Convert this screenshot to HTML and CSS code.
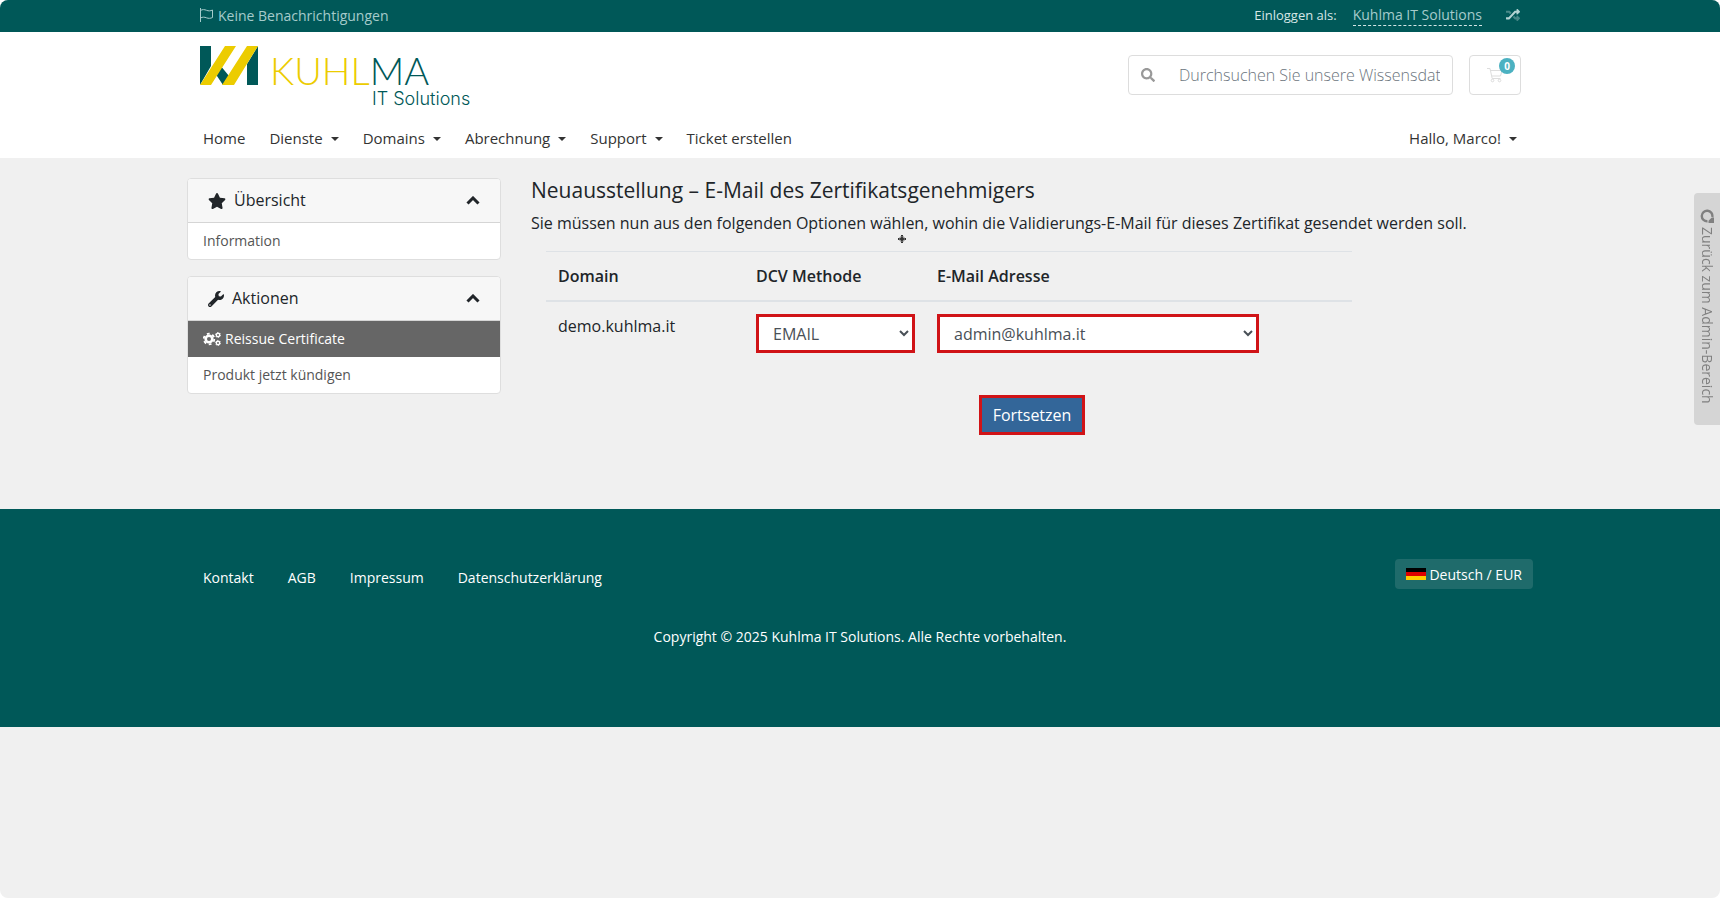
FILE: index.html
```html
<!DOCTYPE html>
<html lang="de">
<head>
    <meta charset="UTF-8">
    <meta name="viewport" content="width=device-width, initial-scale=1.0">
    <title>Kuhlma IT Solutions</title>
    <link rel="stylesheet" href="styles.css">
</head>

<body>
    <header>
        <div class="topbar">
            <div class="container header-inner">
                <button class="notifications" type="button">
                    <svg width="15" height="14" viewBox="0 0 15 14" fill="none" stroke="currentColor"><path d="M1.5 0v14M1.500 2.500c2-1.300 4-1 6-.2s4 .8 6-.3v7.500c-2 1-4 1.100-6 .3s-4-1-6 .2"/></svg>
                    Keine Benachrichtigungen
                </button>
                <div class="active-client">
                    <span>Einloggen als:</span>
                    <a class="client-name" href="#">Kuhlma IT Solutions</a>
                    <a class="client-switch" href="#" aria-label="Konto wechseln">
                        <svg width="14" height="14" viewBox="0 0 512 512" fill="currentColor">
                            <path opacity=".4" d="M504.971 359.029c9.373 9.373 9.373 24.569 0 33.941l-80 79.984c-15.010 15.010-40.971 4.490-40.971-16.971V416h-58.785a12 12 0 0 1-8.773-3.812l-70.556-75.596 53.333-57.143L352 336h32v-39.981c0-21.438 25.943-31.998 40.971-16.971zM12 176h84l52.781 56.551 53.333-57.143-70.556-75.596A12 12 0 0 0 122.785 96H12c-6.627 0-12 5.373-12 12v56c0 6.627 5.373 12 12 12z"/>
                            <path d="M384 176v39.984c0 21.460 25.961 31.980 40.971 16.971l80-79.984c9.373-9.373 9.373-24.569 0-33.941l-80-79.981C409.943 24.021 384 34.582 384 56.019V96h-58.785a12 12 0 0 0-8.773 3.812L96 336H12c-6.627 0-12 5.373-12 12v56c0 6.627 5.373 12 12 12h110.785c3.326 0 6.503-1.381 8.773-3.812L352 176z"/>
                        </svg>
                    </a>
                </div>
            </div>
        </div>

        <div class="masthead">
            <div class="container header-inner">
                <a class="logo" href="#" aria-label="Kuhlma IT Solutions">
                    <svg width="59" height="41" viewBox="0 0 59 41">
                        <path fill="#005858" d="M1 1h11v20L1 40zM59 1v39H48V19zM16 28l5-8 9 11-6 9z"/>
                        <path fill="#eccc00" d="M26 1h11L12 40H1zM48 1h11L35 40H23z"/>
                    </svg>
                    <span class="wordmark">
                        <span class="wordmark-name">KUHL<b>MA</b></span>
                        <span class="wordmark-sub">IT Solutions</span>
                    </span>
                </a>
                <div class="tools">
                    <form class="search">
                        <button type="submit" aria-label="Suchen">
                            <svg width="14" height="14" viewBox="0 0 512 512" fill="currentColor"><path d="M505 442.700L405.300 343c-4.500-4.500-10.600-7-17-7H372c27.600-35.300 44-79.700 44-128C416 93.100 322.900 0 208 0S0 93.100 0 208s93.100 208 208 208c48.300 0 92.700-16.400 128-44v16.300c0 6.400 2.500 12.500 7 17l99.700 99.700c9.400 9.400 24.600 9.400 33.900 0l28.300-28.300c9.400-9.400 9.400-24.600.1-34zM208 336c-70.700 0-128-57.200-128-128 0-70.700 57.200-128 128-128 70.700 0 128 57.200 128 128 0 70.700-57.200 128-128 128z"/></svg>
                        </button>
                        <input type="text" aria-label="Wissensdatenbank durchsuchen" placeholder="Durchsuchen Sie unsere Wissensdatenbank...">
                    </form>
                    <a class="cart" href="#" aria-label="Warenkorb">
                        <svg width="16" height="16" viewBox="0 0 16 16" fill="none" stroke="currentColor"><path d="M0 1.500h3l2.200 10h8.300M3.500 3.500h11.500l-1.500 5.500H4.800"/><circle cx="5.500" cy="13.500" r="1.300"/><circle cx="12.500" cy="13.500" r="1.300"/></svg>
                        <span class="badge">0</span>
                    </a>
                </div>
            </div>
        </div>

        <nav class="navbar">
            <div class="container header-inner">
                <ul class="nav-list">
                    <li><a href="#">Home</a></li>
                    <li><a class="dropdown" href="#">Dienste</a></li>
                    <li><a class="dropdown" href="#">Domains</a></li>
                    <li><a class="dropdown" href="#">Abrechnung</a></li>
                    <li><a class="dropdown" href="#">Support</a></li>
                    <li><a href="#">Ticket erstellen</a></li>
                </ul>
                <ul class="nav-list">
                    <li><a class="dropdown" href="#">Hallo, Marco!</a></li>
                </ul>
            </div>
        </nav>
    </header>

    <div class="container main-body">
        <aside class="sidebar">
            <div class="card">
                <h3 class="card-header">
                    <svg width="18" height="16" viewBox="0 0 576 512" fill="currentColor"><path d="M259.300 17.800L194 150.200 47.900 171.500c-26.200 3.800-36.700 36.100-17.700 54.600l105.700 103-25 145.500c-4.500 26.300 23.200 46 46.400 33.700L288 439.600l130.700 68.700c23.200 12.200 50.900-7.400 46.400-33.700l-25-145.500 105.700-103c19-18.500 8.500-50.800-17.700-54.600L382 150.200 316.700 17.800c-11.700-23.600-45.600-23.900-57.400 0z"/></svg>
                    <span>Übersicht</span>
                    <svg class="chevron" width="14" height="9" viewBox="0 0 14 9"><path d="M1.500 7.500L7 2l5.500 5.500"/></svg>
                </h3>
                <a class="card-item" href="#">Information</a>
            </div>
            <div class="card">
                <h3 class="card-header">
                    <svg width="16" height="16" viewBox="0 0 512 512" fill="currentColor"><path d="M507.730 109.100c-2.240-9.030-13.540-12.090-20.120-5.510l-74.360 74.360-67.880-11.310-11.310-67.880 74.360-74.360c6.620-6.620 3.430-17.900-5.660-20.160-47.380-11.740-99.550.91-136.580 37.930-39.640 39.640-50.550 97.100-34.050 147.200L18.740 402.760c-24.990 24.990-24.990 65.510 0 90.500 24.990 24.990 65.510 24.990 90.500 0l213.210-213.210c50.120 16.710 107.470 5.680 147.370-34.220 37.070-37.070 49.700-89.320 37.910-136.730zM64 472c-13.250 0-24-10.750-24-24 0-13.260 10.750-24 24-24s24 10.740 24 24c0 13.250-10.750 24-24 24z"/></svg>
                    <span>Aktionen</span>
                    <svg class="chevron" width="14" height="9" viewBox="0 0 14 9"><path d="M1.500 7.500L7 2l5.500 5.500"/></svg>
                </h3>
                <a class="card-item active" href="#">
                    <svg width="18" height="14" viewBox="0 0 18 14" fill="none" stroke="currentColor">
                        <circle cx="6" cy="7" r="3.300" stroke-width="2.600"/>
                        <circle cx="6" cy="7" r="5.300" stroke-width="1.800" stroke-dasharray="2.800 2.750"/>
                        <circle cx="15" cy="3" r="1.700" stroke-width="1.400"/>
                        <circle cx="15" cy="3" r="2.600" stroke-width=".8" stroke-dasharray="1.360 1.360"/>
                        <circle cx="15" cy="11" r="1.700" stroke-width="1.400"/>
                        <circle cx="15" cy="11" r="2.600" stroke-width=".8" stroke-dasharray="1.360 1.360"/>
                    </svg>
                    Reissue Certificate
                </a>
                <a class="card-item" href="#">Produkt jetzt kündigen</a>
            </div>
        </aside>

        <main class="content">
            <h2>Neuausstellung – E-Mail des Zertifikatsgenehmigers</h2>
            <p>Sie müssen nun aus den folgenden Optionen wählen, wohin die Validierungs-E-Mail für dieses Zertifikat gesendet werden soll.</p>
            <svg class="pointer" width="8" height="8" viewBox="0 0 8 8" aria-hidden="true"><path d="M4 0v8M0 4h8" stroke="#333" stroke-width="2"/><circle cx="4" cy="4" r="2.500" fill="none" stroke="#777"/></svg>

            <form>
                <table class="approver-table">
                    <thead>
                        <tr>
                            <th class="col-domain">Domain</th>
                            <th class="col-method">DCV Methode</th>
                            <th>E-Mail Adresse</th>
                        </tr>
                    </thead>
                    <tbody>
                        <tr>
                            <td>demo.kuhlma.it</td>
                            <td class="col-method">
                                <select aria-label="DCV Methode">
                                    <option>EMAIL</option>
                                </select>
                            </td>
                            <td>
                                <select class="select-email" aria-label="E-Mail Adresse">
                                    <option>admin@kuhlma.it</option>
                                </select>
                            </td>
                        </tr>
                    </tbody>
                </table>
                <button class="btn-continue" type="submit">Fortsetzen</button>
            </form>
        </main>
    </div>

    <footer>
        <div class="container">
            <div class="footer-top">
                <ul class="footer-nav">
                    <li><a href="#">Kontakt</a></li>
                    <li><a href="#">AGB</a></li>
                    <li><a href="#">Impressum</a></li>
                    <li><a href="#">Datenschutzerklärung</a></li>
                </ul>
                <button class="btn-language" type="button"><span class="flag-de"></span>Deutsch / EUR</button>
            </div>
            <p class="copyright">Copyright © 2025 Kuhlma IT Solutions. Alle Rechte vorbehalten.</p>
        </div>
    </footer>

    <a class="admin-tab" href="#">
        <svg width="14" height="14" viewBox="0 0 14 14"><path d="M7.500 12.300A5.300 5.300 0 1 1 12.300 8" fill="none" stroke="currentColor" stroke-width="2.400"/><path d="M14 14V8.500h-2.200L8.500 11.800V14z" fill="currentColor"/></svg>
        Zurück zum Admin-Bereich
    </a>
</body>
</html>
```

FILE: styles.css
```css
* {
    box-sizing: border-box;
}

html {
    background-color: white;
}

body {
    margin: 0;
    min-height: 100vh;
    background-color: #f0f0f0;
    border-radius: 8px;
    overflow: hidden;
    font-family: "Open Sans", sans-serif;
    font-size: 16px;
    line-height: 24px;
    color: #212529;
}

a {
    color: inherit;
    text-decoration: none;
}

button, input, select {
    font-family: inherit;
    font-size: inherit;
}

ul {
    list-style: none;
    margin: 0;
    padding: 0;
}

.container {
    max-width: 1346px;
    margin: 0 auto;
}

.header-inner {
    display: flex;
    justify-content: space-between;
    padding: 0 12px;
}

/* Top bar */
.topbar {
    padding-bottom: 2px;
    background-color: #005858;
    font-size: 14px;
}

.topbar .container {
    height: 30px;
    align-items: center;
}

.notifications {
    display: flex;
    align-items: center;
    gap: 4px;
    padding: 0;
    border: 0;
    background: none;
    color: #a5cbcb;
}

.active-client {
    display: flex;
    align-items: center;
    gap: 16px;
    color: #d5e6e6;
    font-size: 13px;
}

.client-name {
    color: #a5cbcb;
    font-size: 14px;
    line-height: 20px;
    border-bottom: 1px dashed #d5e6e6;
}

.client-switch {
    display: flex;
    margin: 0 1px 0 8px;
    color: #b5d3d3;
}

/* Logo, search, cart */
.masthead {
    background-color: white;
    padding: 13px 0 17px;
}

.masthead .container {
    align-items: flex-start;
}

.logo {
    display: flex;
    gap: 12px;
    height: 62px;
}

.wordmark {
    display: flex;
    flex-direction: column;
    font-weight: 300;
    color: #005858;
}

.wordmark-name {
    padding-top: 5px;
    color: #eccc00;
    font-family: Lato, sans-serif;
    font-size: 38px;
    line-height: 40px;
}

.wordmark-name b {
    color: #005858;
    font-weight: 300;
}

.wordmark-sub {
    margin: 1px 0 0 102px;
    font-family: Inter, sans-serif;
    font-size: 18px;
    line-height: 16px;
}

.tools {
    display: flex;
    gap: 16px;
    padding-top: 10px;
}

.search {
    display: flex;
    align-items: center;
    width: 325px;
    height: 40px;
    border: 1px solid #ddd;
    border-radius: 4px;
}

.search button {
    display: flex;
    padding: 12px;
    border: 0;
    background: none;
    color: #999;
}

.search input {
    flex: 1;
    min-width: 0;
    padding: 0 12px;
    border: 0;
    outline: 0;
    background: none;
    font-weight: 300;
}

.search input::placeholder {
    color: #6c757d;
}

.cart {
    position: relative;
    display: flex;
    align-items: center;
    justify-content: center;
    width: 52px;
    height: 40px;
    border: 1px solid #ddd;
    border-radius: 4px;
    color: #ddd;
}

.badge {
    position: absolute;
    top: 2px;
    right: 5px;
    width: 16px;
    border-radius: 8px;
    background-color: #4bb1c1;
    color: white;
    font-size: 10px;
    font-weight: 700;
    line-height: 16px;
    text-align: center;
}

/* Navigation */
.navbar {
    background-color: white;
    padding-bottom: 6px;
    font-size: 15px;
    color: #333;
}

.nav-list {
    display: flex;
    gap: 24px;
    padding: 0 4px;
}

.nav-list a {
    display: block;
    line-height: 28px;
}

.dropdown::after {
    content: "";
    display: inline-block;
    margin-left: 8px;
    vertical-align: 3px;
    border-top: 4px solid;
    border-left: 4px solid transparent;
    border-right: 4px solid transparent;
}

/* Sidebar */
.main-body {
    display: flex;
    gap: 30px;
    padding: 20px 0 74px;
}

.sidebar {
    width: 314px;
    flex: none;
}

.card {
    margin-bottom: 16px;
    border: 1px solid #dedede;
    border-radius: 4px;
    background-color: white;
    overflow: hidden;
}

.card-header {
    display: flex;
    align-items: center;
    gap: 8px;
    margin: 0;
    padding: 10px 20px;
    border-bottom: 1px solid #d5d5d5;
    background-color: #f7f7f7;
    font-size: 16px;
    font-weight: 400;
    line-height: 23px;
}

.chevron {
    margin-left: auto;
    fill: none;
    stroke: currentColor;
    stroke-width: 3;
}

.card-item {
    display: flex;
    align-items: center;
    gap: 4px;
    padding: 8px 15px;
    color: #555;
    font-size: 14px;
    line-height: 20px;
}

.card-item.active {
    background-color: #666;
    color: white;
}

/* Content */
.content {
    position: relative;
    flex: 1;
}

.content h2 {
    margin: 0 0 8px;
    font-size: 21px;
    font-weight: 400;
    line-height: 25px;
}

.content p {
    margin: 0;
}

.pointer {
    position: absolute;
    left: 367px;
    top: 57px;
}

.approver-table {
    width: 806px;
    max-width: 100%;
    margin: 16px 0 30px 15px;
    border-collapse: collapse;
}

.approver-table th,
.approver-table td {
    padding: 12px;
    border-top: 1px solid #dee2e6;
    text-align: left;
    vertical-align: top;
}

.approver-table th {
    border-bottom: 2px solid #dee2e6;
    font-weight: 600;
}

.col-domain {
    width: 198px;
}

.approver-table .col-method {
    width: 181px;
    padding-right: 10px;
}

.approver-table select {
    display: block;
    width: 100%;
    height: 39px;
    padding: 0 0 0 10px;
    border: 3px solid #d01317;
    background-color: white;
    color: #495057;
}

.approver-table .select-email {
    width: 80%;
}

.btn-continue {
    display: block;
    height: 40px;
    margin: 0 auto;
    padding: 0 11px;
    border: 3px solid #d01317;
    background-color: #336699;
    color: white;
}

/* Footer */
footer {
    padding: 50px 0 78px;
    background-color: #005858;
    color: white;
    font-size: 14px;
}

.footer-top {
    display: flex;
    justify-content: space-between;
}

.footer-nav {
    display: flex;
    gap: 34px;
    padding: 7px 16px;
}

.btn-language {
    display: flex;
    align-items: center;
    gap: 3px;
    height: 30px;
    padding: 0 11px;
    border: 0;
    border-radius: 4px;
    background-color: #1f6b6b;
    color: white;
}

.flag-de {
    width: 20px;
    height: 12px;
    background: linear-gradient(#000 33%, #d00 33%, #d00 67%, #fc0 67%);
}

.copyright {
    margin: 28px 0 0;
    text-align: center;
}

/* Admin link on the window edge */
.admin-tab {
    position: fixed;
    top: 193px;
    right: 0;
    display: flex;
    align-items: center;
    gap: 4px;
    height: 232px;
    padding: 16px 0;
    border-radius: 4px 0 0 4px;
    background-color: #d5d5d5;
    color: #808080;
    font-size: 14px;
    line-height: 26px;
    writing-mode: vertical-rl;
}
```
